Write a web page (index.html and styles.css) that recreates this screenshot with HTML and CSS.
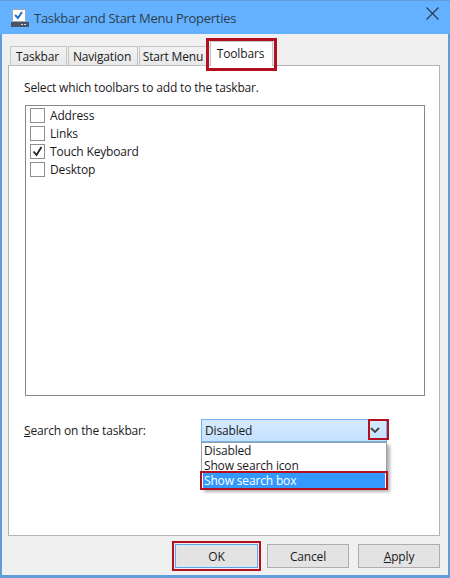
FILE: index.html
```html
<!DOCTYPE html>
<html lang="en">
<head>
    <meta charset="UTF-8">
    <title>Taskbar and Start Menu Properties</title>
    <link rel="stylesheet" href="styles.css">
</head>
<body>

<div class="window">
    <div class="titlebar">
        <svg class="app-icon" width="18" height="18" viewBox="0 0 18 18">
            <rect x="1.5" y="0.5" width="13" height="12" fill="#fff" stroke="#9aa6b2"/>
            <path d="M4 6l3 3 4-6" fill="none" stroke="#1f6fd0" stroke-width="2"/>
            <rect x="0" y="13" width="18" height="5" fill="#4a5563"/>
            <rect x="10" y="15" width="2" height="1" fill="#cfd6dc"/>
            <rect x="13" y="15" width="2" height="1" fill="#cfd6dc"/>
        </svg>
        <span class="title">Taskbar and Start Menu Properties</span>
        <svg class="close" width="13" height="13" viewBox="0 0 13 13">
            <path d="M0.5 0.5l12 12M12.5 0.5l-12 12" stroke="#2b3a4c" stroke-width="1.2" fill="none"/>
        </svg>
    </div>

    <div class="content">
        <div class="tabs">
            <div class="tab">Taskbar</div>
            <div class="tab tab-nav">Navigation</div>
            <div class="tab tab-start">Start Menu</div>
            <div class="tab active">Toolbars<span class="mark mark-tab"></span></div>
        </div>

        <div class="panel">
            <p class="intro">Select which toolbars to add to the taskbar.</p>
            <div class="listbox">
                <label class="row"><span class="check"></span>Address</label>
                <label class="row"><span class="check"></span>Links</label>
                <label class="row">
                    <span class="check">
                        <svg width="11" height="11" viewBox="0 0 11 11"><path d="M1.5 5.5l3 3.5 5-8" fill="none" stroke="#222" stroke-width="1.8"/></svg>
                    </span>Touch Keyboard
                </label>
                <label class="row"><span class="check"></span>Desktop</label>
            </div>

            <div class="search-row">
                <span class="search-label"><u>S</u>earch on the taskbar:</span>
                <div class="combo">
                    <div class="combo-box">
                        <span>Disabled</span>
                        <svg class="arrow" width="10" height="7" viewBox="0 0 10 7"><path d="M1 1l4 4 4-4" fill="none" stroke="#444" stroke-width="1.8"/></svg>
                        <span class="mark mark-arrow"></span>
                    </div>
                    <div class="dropdown">
                        <div class="option">Disabled</div>
                        <div class="option">Show search icon</div>
                        <div class="option selected">Show search box<span class="mark mark-option"></span></div>
                    </div>
                </div>
            </div>
        </div>

        <div class="buttons">
            <button class="btn btn-ok">OK<span class="mark mark-ok"></span></button>
            <button class="btn btn-cancel">Cancel</button>
            <button class="btn btn-apply"><u>A</u>pply</button>
        </div>
    </div>
</div>

</body>
</html>
```

FILE: styles.css
```css
* {
    box-sizing: border-box;
}
html, body {
    margin: 0;
    height: 100%;
}
body {
    font-family: "Open Sans", "Noto Sans", sans-serif;
    font-size: 12px;
    letter-spacing: -0.16px;
    color: #1a1a1a;
    background: #fff;
}
.window {
    width: 450px;
    height: 578px;
    display: flex;
    flex-direction: column;
    background: #f0f0f0;
    border: 2px solid #5f9ed8;
    border-top: 1px solid #5f9ed8;
    border-bottom: 3px solid #5f9ed8;
}
.titlebar {
    height: 33px;
    flex: none;
    margin: 0 -2px;
    padding: 0 11px 0 11px;
    display: flex;
    align-items: center;
    background: #63b1ff;
}
.app-icon {
    margin: 1px 5px 0 0;
}
.title {
    font-size: 13px;
    letter-spacing: -0.28px;
    color: #2f3f50;
    flex: 1;
}
.close {
    margin-bottom: 8px;
}
.content {
    flex: 1;
    padding: 7px 8px 0 6px;
    display: flex;
    flex-direction: column;
}
.tabs {
    height: 25px;
    flex: none;
    padding-left: 2px;
    display: flex;
    align-items: flex-end;
    position: relative;
    z-index: 1;
    margin-bottom: -1px;
}
.tab {
    width: 57px;
    height: 20px;
    margin-right: 1px;
    padding: 1px 2px 0 0;
    text-align: center;
    background: linear-gradient(#f2f2f2, #e8e8e8);
    border: 1px solid #c4c4c4;
    border-bottom: 1px solid #bdbdbd;
    white-space: nowrap;
}
.tab-nav {
    width: 70px;
}
.tab-start {
    width: 72px;
    margin-right: -1px;
    padding-right: 4px;
}
.tab.active {
    width: 63px;
    height: 25px;
    margin-right: 0;
    padding: 3px 2px 0 0;
    background: #fff;
    border-bottom: none;
    position: relative;
}
.panel {
    width: 432px;
    height: 471px;
    flex: none;
    background: #fff;
    border: 1px solid #b4b4b4;
    padding: 14px 15px 0 16px;
}
.intro {
    margin: 0 0 9px -1px;
    line-height: 16px;
}
.listbox {
    width: 400px;
    height: 291px;
    padding: 0 0 0 4px;
    border: 1px solid #828790;
    background: #fff;
}
.row {
    height: 18px;
    display: flex;
    align-items: center;
}
.check {
    width: 15px;
    height: 15px;
    margin-right: 5px;
    display: flex;
    align-items: center;
    justify-content: center;
    border: 1px solid #8e8f8f;
    background: #fff;
}
.search-row {
    margin-top: 23px;
    display: flex;
    align-items: flex-start;
}
.search-label {
    width: 177px;
    margin-left: -1px;
    padding-top: 3px;
}
.combo {
    width: 186px;
    position: relative;
}
.combo-box {
    height: 23px;
    padding: 0 5px 1px 3px;
    display: flex;
    align-items: center;
    justify-content: space-between;
    background: linear-gradient(#d6ebff, #c4e1ff);
    border: 1px solid #6fb0ee;
}
.arrow {
    margin-right: 1px;
}
.dropdown {
    position: absolute;
    top: 23px;
    left: 0;
    width: 186px;
    height: 47px;
    padding: 0 1px;
    background: #fff;
    border: 1px solid #9aa0a6;
    box-shadow: 3px 3px 3px rgba(0, 0, 0, 0.3);
}
.option {
    height: 15px;
    line-height: 15px;
    padding-left: 1px;
    position: relative;
}
.option.selected {
    background: #3399ff;
    color: #fff;
}
.buttons {
    margin-top: 8px;
    display: flex;
    justify-content: flex-end;
}
.btn {
    width: 82px;
    height: 24px;
    padding: 0;
    margin-left: 9px;
    font: inherit;
    letter-spacing: inherit;
    color: #1a1a1a;
    background: #e3e3e3;
    border: 1px solid #adadad;
    position: relative;
}
.btn-ok {
    width: 83px;
    border-color: #5ea5e8;
    box-shadow: inset 0 0 0 1px #d8ebfb;
}
/* red callouts drawn on top of the dialog */
.mark {
    position: absolute;
    border: 2px solid #b40f1e;
    pointer-events: none;
}
.mark-tab {
    left: -5px;
    right: -5px;
    top: -4px;
    bottom: -5px;
    border-width: 3px;
}
.mark-arrow {
    right: -2px;
    top: 0;
    width: 21px;
    height: 21px;
}
.mark-option {
    left: -3px;
    right: -3px;
    top: -2px;
    bottom: -2px;
}
.mark-ok {
    left: -4px;
    right: -4px;
    top: -4px;
    bottom: -4px;
}
```
